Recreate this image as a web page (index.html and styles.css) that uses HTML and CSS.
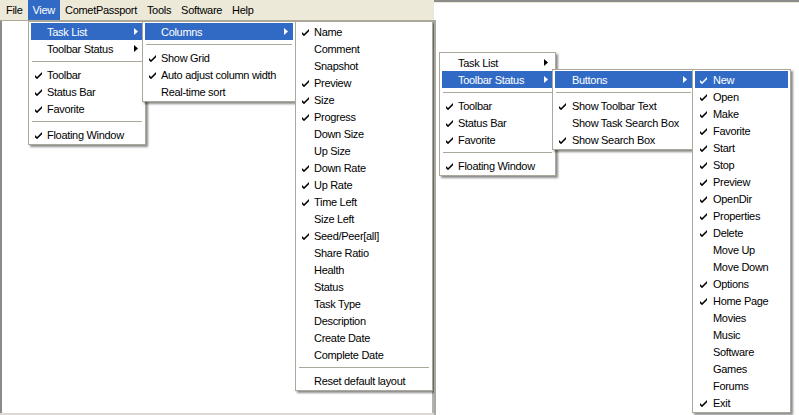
FILE: index.html
```html
<!DOCTYPE html>
<html>
<head>
<meta charset="utf-8">
<link rel="stylesheet" href="styles.css">
<title>Menus</title>
</head>
<body>
<div class="shot">
  <section class="panel panel-left">
    <div class="menubar">
      <span class="mb-item">File</span>
      <span class="mb-item active">View</span>
      <span class="mb-item">CometPassport</span>
      <span class="mb-item">Tools</span>
      <span class="mb-item">Software</span>
      <span class="mb-item">Help</span>
    </div>
    <div class="client"></div>

    <div class="menu lv-view">
      <div class="mi hl"><span class="ck"></span><span class="lbl">Task List</span><svg class="arr" viewBox="0 0 4 7"><polygon points="0,0 4,3.5 0,7"/></svg></div>
      <div class="mi"><span class="ck"></span><span class="lbl">Toolbar Status</span><svg class="arr" viewBox="0 0 4 7"><polygon points="0,0 4,3.5 0,7"/></svg></div>
      <div class="sep"></div>
      <div class="mi"><svg class="ck" viewBox="0 0 7 7"><polygon points="0,3 2,5 7,0 7,2.2 2,7.2 0,5.2"/></svg><span class="lbl">Toolbar</span></div>
      <div class="mi"><svg class="ck" viewBox="0 0 7 7"><polygon points="0,3 2,5 7,0 7,2.2 2,7.2 0,5.2"/></svg><span class="lbl">Status Bar</span></div>
      <div class="mi"><svg class="ck" viewBox="0 0 7 7"><polygon points="0,3 2,5 7,0 7,2.2 2,7.2 0,5.2"/></svg><span class="lbl">Favorite</span></div>
      <div class="sep"></div>
      <div class="mi"><svg class="ck" viewBox="0 0 7 7"><polygon points="0,3 2,5 7,0 7,2.2 2,7.2 0,5.2"/></svg><span class="lbl">Floating Window</span></div>
    </div>

    <div class="menu lv-tasklist">
      <div class="mi hl"><span class="ck"></span><span class="lbl">Columns</span><svg class="arr" viewBox="0 0 4 7"><polygon points="0,0 4,3.5 0,7"/></svg></div>
      <div class="sep"></div>
      <div class="mi"><svg class="ck" viewBox="0 0 7 7"><polygon points="0,3 2,5 7,0 7,2.2 2,7.2 0,5.2"/></svg><span class="lbl">Show Grid</span></div>
      <div class="mi"><svg class="ck" viewBox="0 0 7 7"><polygon points="0,3 2,5 7,0 7,2.2 2,7.2 0,5.2"/></svg><span class="lbl">Auto adjust column width</span></div>
      <div class="mi"><span class="ck"></span><span class="lbl">Real-time sort</span></div>
    </div>

    <div class="menu lv-columns">
      <div class="mi"><svg class="ck" viewBox="0 0 7 7"><polygon points="0,3 2,5 7,0 7,2.2 2,7.2 0,5.2"/></svg><span class="lbl">Name</span></div>
      <div class="mi"><span class="ck"></span><span class="lbl">Comment</span></div>
      <div class="mi"><span class="ck"></span><span class="lbl">Snapshot</span></div>
      <div class="mi"><svg class="ck" viewBox="0 0 7 7"><polygon points="0,3 2,5 7,0 7,2.2 2,7.2 0,5.2"/></svg><span class="lbl">Preview</span></div>
      <div class="mi"><svg class="ck" viewBox="0 0 7 7"><polygon points="0,3 2,5 7,0 7,2.2 2,7.2 0,5.2"/></svg><span class="lbl">Size</span></div>
      <div class="mi"><svg class="ck" viewBox="0 0 7 7"><polygon points="0,3 2,5 7,0 7,2.2 2,7.2 0,5.2"/></svg><span class="lbl">Progress</span></div>
      <div class="mi"><span class="ck"></span><span class="lbl">Down Size</span></div>
      <div class="mi"><span class="ck"></span><span class="lbl">Up Size</span></div>
      <div class="mi"><svg class="ck" viewBox="0 0 7 7"><polygon points="0,3 2,5 7,0 7,2.2 2,7.2 0,5.2"/></svg><span class="lbl">Down Rate</span></div>
      <div class="mi"><svg class="ck" viewBox="0 0 7 7"><polygon points="0,3 2,5 7,0 7,2.2 2,7.2 0,5.2"/></svg><span class="lbl">Up Rate</span></div>
      <div class="mi"><svg class="ck" viewBox="0 0 7 7"><polygon points="0,3 2,5 7,0 7,2.2 2,7.2 0,5.2"/></svg><span class="lbl">Time Left</span></div>
      <div class="mi"><span class="ck"></span><span class="lbl">Size Left</span></div>
      <div class="mi"><svg class="ck" viewBox="0 0 7 7"><polygon points="0,3 2,5 7,0 7,2.2 2,7.2 0,5.2"/></svg><span class="lbl">Seed/Peer[all]</span></div>
      <div class="mi"><span class="ck"></span><span class="lbl">Share Ratio</span></div>
      <div class="mi"><span class="ck"></span><span class="lbl">Health</span></div>
      <div class="mi"><span class="ck"></span><span class="lbl">Status</span></div>
      <div class="mi"><span class="ck"></span><span class="lbl">Task Type</span></div>
      <div class="mi"><span class="ck"></span><span class="lbl">Description</span></div>
      <div class="mi"><span class="ck"></span><span class="lbl">Create Date</span></div>
      <div class="mi"><span class="ck"></span><span class="lbl">Complete Date</span></div>
      <div class="sep"></div>
      <div class="mi"><span class="ck"></span><span class="lbl">Reset default layout</span></div>
    </div>
  </section>

  <section class="panel panel-right">
    <div class="topbar"></div>
    <div class="client"></div>

    <div class="menu rv-view">
      <div class="mi"><span class="ck"></span><span class="lbl">Task List</span><svg class="arr" viewBox="0 0 4 7"><polygon points="0,0 4,3.5 0,7"/></svg></div>
      <div class="mi hl"><span class="ck"></span><span class="lbl">Toolbar Status</span><svg class="arr" viewBox="0 0 4 7"><polygon points="0,0 4,3.5 0,7"/></svg></div>
      <div class="sep"></div>
      <div class="mi"><svg class="ck" viewBox="0 0 7 7"><polygon points="0,3 2,5 7,0 7,2.2 2,7.2 0,5.2"/></svg><span class="lbl">Toolbar</span></div>
      <div class="mi"><svg class="ck" viewBox="0 0 7 7"><polygon points="0,3 2,5 7,0 7,2.2 2,7.2 0,5.2"/></svg><span class="lbl">Status Bar</span></div>
      <div class="mi"><svg class="ck" viewBox="0 0 7 7"><polygon points="0,3 2,5 7,0 7,2.2 2,7.2 0,5.2"/></svg><span class="lbl">Favorite</span></div>
      <div class="sep"></div>
      <div class="mi"><svg class="ck" viewBox="0 0 7 7"><polygon points="0,3 2,5 7,0 7,2.2 2,7.2 0,5.2"/></svg><span class="lbl">Floating Window</span></div>
    </div>

    <div class="menu rv-toolbar">
      <div class="mi hl"><span class="ck"></span><span class="lbl">Buttons</span><svg class="arr" viewBox="0 0 4 7"><polygon points="0,0 4,3.5 0,7"/></svg></div>
      <div class="sep"></div>
      <div class="mi"><svg class="ck" viewBox="0 0 7 7"><polygon points="0,3 2,5 7,0 7,2.2 2,7.2 0,5.2"/></svg><span class="lbl">Show Toolbar Text</span></div>
      <div class="mi"><span class="ck"></span><span class="lbl">Show Task Search Box</span></div>
      <div class="mi"><svg class="ck" viewBox="0 0 7 7"><polygon points="0,3 2,5 7,0 7,2.2 2,7.2 0,5.2"/></svg><span class="lbl">Show Search Box</span></div>
    </div>

    <div class="menu rv-buttons">
      <div class="mi hl"><svg class="ck" viewBox="0 0 7 7"><polygon points="0,3 2,5 7,0 7,2.2 2,7.2 0,5.2"/></svg><span class="lbl">New</span></div>
      <div class="mi"><svg class="ck" viewBox="0 0 7 7"><polygon points="0,3 2,5 7,0 7,2.2 2,7.2 0,5.2"/></svg><span class="lbl">Open</span></div>
      <div class="mi"><svg class="ck" viewBox="0 0 7 7"><polygon points="0,3 2,5 7,0 7,2.2 2,7.2 0,5.2"/></svg><span class="lbl">Make</span></div>
      <div class="mi"><svg class="ck" viewBox="0 0 7 7"><polygon points="0,3 2,5 7,0 7,2.2 2,7.2 0,5.2"/></svg><span class="lbl">Favorite</span></div>
      <div class="mi"><svg class="ck" viewBox="0 0 7 7"><polygon points="0,3 2,5 7,0 7,2.2 2,7.2 0,5.2"/></svg><span class="lbl">Start</span></div>
      <div class="mi"><svg class="ck" viewBox="0 0 7 7"><polygon points="0,3 2,5 7,0 7,2.2 2,7.2 0,5.2"/></svg><span class="lbl">Stop</span></div>
      <div class="mi"><svg class="ck" viewBox="0 0 7 7"><polygon points="0,3 2,5 7,0 7,2.2 2,7.2 0,5.2"/></svg><span class="lbl">Preview</span></div>
      <div class="mi"><svg class="ck" viewBox="0 0 7 7"><polygon points="0,3 2,5 7,0 7,2.2 2,7.2 0,5.2"/></svg><span class="lbl">OpenDir</span></div>
      <div class="mi"><svg class="ck" viewBox="0 0 7 7"><polygon points="0,3 2,5 7,0 7,2.2 2,7.2 0,5.2"/></svg><span class="lbl">Properties</span></div>
      <div class="mi"><svg class="ck" viewBox="0 0 7 7"><polygon points="0,3 2,5 7,0 7,2.2 2,7.2 0,5.2"/></svg><span class="lbl">Delete</span></div>
      <div class="mi"><span class="ck"></span><span class="lbl">Move Up</span></div>
      <div class="mi"><span class="ck"></span><span class="lbl">Move Down</span></div>
      <div class="mi"><svg class="ck" viewBox="0 0 7 7"><polygon points="0,3 2,5 7,0 7,2.2 2,7.2 0,5.2"/></svg><span class="lbl">Options</span></div>
      <div class="mi"><svg class="ck" viewBox="0 0 7 7"><polygon points="0,3 2,5 7,0 7,2.2 2,7.2 0,5.2"/></svg><span class="lbl">Home Page</span></div>
      <div class="mi"><span class="ck"></span><span class="lbl">Movies</span></div>
      <div class="mi"><span class="ck"></span><span class="lbl">Music</span></div>
      <div class="mi"><span class="ck"></span><span class="lbl">Software</span></div>
      <div class="mi"><span class="ck"></span><span class="lbl">Games</span></div>
      <div class="mi"><span class="ck"></span><span class="lbl">Forums</span></div>
      <div class="mi"><svg class="ck" viewBox="0 0 7 7"><polygon points="0,3 2,5 7,0 7,2.2 2,7.2 0,5.2"/></svg><span class="lbl">Exit</span></div>
    </div>
  </section>
</div>
</body>
</html>
```

FILE: styles.css
```css
* { box-sizing: border-box; }

html, body {
  margin: 0;
  padding: 0;
  background: #ffffff;
}

body {
  font-family: "Liberation Sans", Arial, sans-serif;
  font-size: 11px;
  letter-spacing: -0.3px;
  color: #000;
}

.shot {
  width: 799px;
  height: 415px;
  display: flex;
  overflow: hidden;
}

.panel {
  position: relative;
  height: 415px;
  display: flex;
  flex-direction: column;
  background: #ffffff;
}

.panel-left {
  width: 434px;
  border-bottom: 2px solid #dcdad2;
}

.panel-right {
  width: 365px;
}

/* menubar */
.menubar {
  height: 21px;
  background: #ece9d8;
  border-bottom: 1px solid #aca899;
  display: flex;
  align-items: stretch;
  flex: none;
}

.mb-item {
  padding: 0 5px;
  line-height: 20px;
  white-space: nowrap;
}

.mb-item:first-child {
  padding-left: 6px;
}

.mb-item.active {
  background: #316ac5;
  color: #fff;
}

.client {
  flex: 1;
  background: #fff;
}

.panel-left .client {
  border-left: 2px solid #8a8a8a;
  border-right: 2px solid #b4b2aa;
}

.panel-right .topbar {
  height: 3px;
  flex: none;
  border-top: 2px solid #8c8c8c;
  background: #ece9d8;
}

.panel-right .client {
  border-left: 2px solid #a8a8a8;
  margin-top: 17px;
}

/* popup menus */
.menu {
  position: absolute;
  background: #fff;
  border: 1px solid #aca899;
  padding: 1px 2px;
  box-shadow: 2px 2px 2px rgba(0, 0, 0, 0.45);
  display: flex;
  flex-direction: column;
}

.mi {
  height: 17px;
  display: flex;
  align-items: center;
  padding: 0 5px 0 4px;
  white-space: nowrap;
}

.mi.hl {
  background: #316ac5;
  color: #fff;
}

.ck {
  width: 7px;
  height: 7px;
  flex: none;
  margin: 1px 5px 0 0;
  fill: currentColor;
}

.lbl {
  flex: 1;
}

.arr {
  width: 4px;
  height: 7px;
  flex: none;
  fill: currentColor;
}

.sep {
  height: 1px;
  margin: 4px 1px;
  background: #aca899;
  flex: none;
}

/* left screenshot placement */
.lv-view {
  left: 28px;
  top: 21px;
  width: 118px;
}

.lv-tasklist {
  left: 142px;
  top: 21px;
  width: 154px;
}

.lv-columns {
  left: 295px;
  top: 21px;
  width: 138px;
}

/* right screenshot placement (relative to panel) */
.rv-view {
  left: 5px;
  top: 52px;
  width: 117px;
}

.rv-toolbar {
  left: 118px;
  top: 69px;
  width: 143px;
}

.rv-toolbar .ck {
  margin-right: 6px;
}

.rv-buttons {
  left: 258px;
  top: 69px;
  width: 99px;
}

.rv-buttons .ck {
  margin-left: 1px;
  margin-right: 6px;
}
```
